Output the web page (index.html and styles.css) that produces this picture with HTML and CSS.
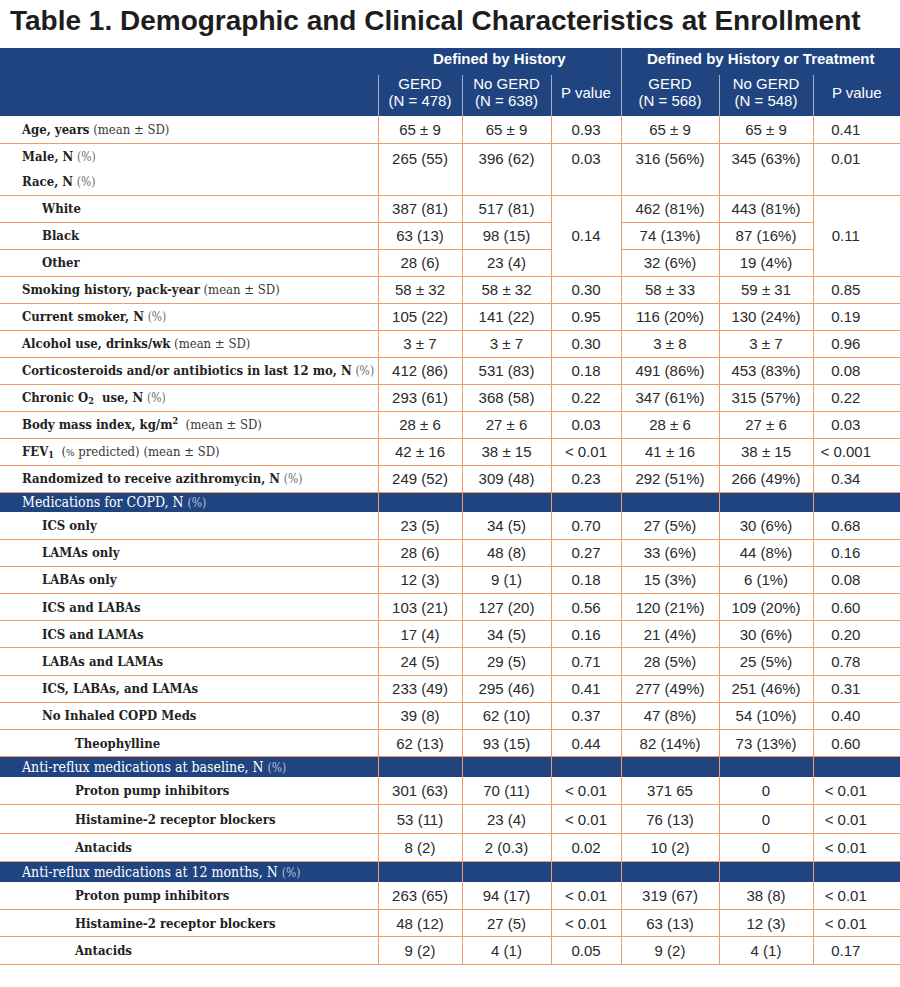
FILE: index.html
```html
<!DOCTYPE html>
<html>
<head>
<meta charset="utf-8">
<link rel="stylesheet" href="styles.css">
</head>
<body>
<h1 class="title">Table 1. Demographic and Clinical Characteristics at Enrollment</h1>
<table class="tbl">
<colgroup>
<col class="c-label"><col class="c-g1"><col class="c-n1"><col class="c-p1"><col class="c-g2"><col class="c-n2"><col class="c-p2">
</colgroup>
<thead>
<tr class="h1">
<th rowspan="2" class="blank"></th>
<th colspan="3" class="grp">Defined by History</th>
<th colspan="3" class="grp sep">Defined by History or Treatment</th>
</tr>
<tr class="h2">
<th class="sep">GERD<br>(N = 478)</th>
<th class="sep">No GERD<br>(N = 638)</th>
<th class="sep">P value</th>
<th class="sep">GERD<br>(N = 568)</th>
<th class="sep">No GERD<br>(N = 548)</th>
<th class="sep">P value</th>
</tr>
</thead>
<tbody class="top">
<tr><td class="lbl"><b>Age, years</b> <span class="par">(mean ± SD)</span></td><td>65 ± 9</td><td>65 ± 9</td><td>0.93</td><td>65 ± 9</td><td>65 ± 9</td><td class="pl">0.41</td></tr>
<tr class="male"><td class="lbl"><b>Male, N</b> <span class="pct">(%)</span></td><td>265 (55)</td><td>396 (62)</td><td>0.03</td><td>316 (56%)</td><td>345 (63%)</td><td class="pl">0.01</td></tr>
<tr class="race"><td class="lbl"><b>Race, N</b> <span class="pct">(%)</span></td><td></td><td></td><td></td><td></td><td></td><td class="pl"></td></tr>
<tr><td class="lbl sub"><b>White</b></td><td>387 (81)</td><td>517 (81)</td><td rowspan="3">0.14</td><td>462 (81%)</td><td>443 (81%)</td><td rowspan="3" class="pl">0.11</td></tr>
<tr><td class="lbl sub"><b>Black</b></td><td>63 (13)</td><td>98 (15)</td><td>74 (13%)</td><td>87 (16%)</td></tr>
<tr><td class="lbl sub"><b>Other</b></td><td>28 (6)</td><td>23 (4)</td><td>32 (6%)</td><td>19 (4%)</td></tr>
<tr><td class="lbl"><b>Smoking history, pack-year</b> <span class="par">(mean ± SD)</span></td><td>58 ± 32</td><td>58 ± 32</td><td>0.30</td><td>58 ± 33</td><td>59 ± 31</td><td class="pl">0.85</td></tr>
<tr><td class="lbl"><b>Current smoker, N</b> <span class="pct">(%)</span></td><td>105 (22)</td><td>141 (22)</td><td>0.95</td><td>116 (20%)</td><td>130 (24%)</td><td class="pl">0.19</td></tr>
<tr><td class="lbl"><b>Alcohol use, drinks/wk</b> <span class="par">(mean ± SD)</span></td><td>3 ± 7</td><td>3 ± 7</td><td>0.30</td><td>3 ± 8</td><td>3 ± 7</td><td class="pl">0.96</td></tr>
<tr><td class="lbl"><b>Corticosteroids and/or antibiotics in last 12 mo, N</b> <span class="pct">(%)</span></td><td>412 (86)</td><td>531 (83)</td><td>0.18</td><td>491 (86%)</td><td>453 (83%)</td><td class="pl">0.08</td></tr>
<tr><td class="lbl"><b>Chronic O<sub>2</sub>&nbsp; use, N</b> <span class="pct">(%)</span></td><td>293 (61)</td><td>368 (58)</td><td>0.22</td><td>347 (61%)</td><td>315 (57%)</td><td class="pl">0.22</td></tr>
<tr><td class="lbl"><b>Body mass index, kg/m<sup>2</sup></b>&nbsp; <span class="par">(mean ± SD)</span></td><td>28 ± 6</td><td>27 ± 6</td><td>0.03</td><td>28 ± 6</td><td>27 ± 6</td><td class="pl">0.03</td></tr>
<tr><td class="lbl"><b>FEV<sub>1</sub></b>&nbsp; <span class="par">(<span class="pcts">%</span> predicted) (mean ± SD)</span></td><td>42 ± 16</td><td>38 ± 15</td><td>&lt; 0.01</td><td>41 ± 16</td><td>38 ± 15</td><td class="pl">&lt; 0.001</td></tr>
<tr><td class="lbl"><b>Randomized to receive azithromycin, N</b> <span class="pct">(%)</span></td><td>249 (52)</td><td>309 (48)</td><td>0.23</td><td>292 (51%)</td><td>266 (49%)</td><td class="pl">0.34</td></tr>
</tbody>
<tbody class="meds">
<tr class="sec"><td class="lbl">Medications for COPD, N <span class="pct">(%)</span></td><td></td><td></td><td></td><td></td><td></td><td></td></tr>
<tr><td class="lbl sub"><b>ICS only</b></td><td>23 (5)</td><td>34 (5)</td><td>0.70</td><td>27 (5%)</td><td>30 (6%)</td><td class="pl">0.68</td></tr>
<tr><td class="lbl sub"><b>LAMAs only</b></td><td>28 (6)</td><td>48 (8)</td><td>0.27</td><td>33 (6%)</td><td>44 (8%)</td><td class="pl">0.16</td></tr>
<tr><td class="lbl sub"><b>LABAs only</b></td><td>12 (3)</td><td>9 (1)</td><td>0.18</td><td>15 (3%)</td><td>6 (1%)</td><td class="pl">0.08</td></tr>
<tr><td class="lbl sub"><b>ICS and LABAs</b></td><td>103 (21)</td><td>127 (20)</td><td>0.56</td><td>120 (21%)</td><td>109 (20%)</td><td class="pl">0.60</td></tr>
<tr><td class="lbl sub"><b>ICS and LAMAs</b></td><td>17 (4)</td><td>34 (5)</td><td>0.16</td><td>21 (4%)</td><td>30 (6%)</td><td class="pl">0.20</td></tr>
<tr><td class="lbl sub"><b>LABAs and LAMAs</b></td><td>24 (5)</td><td>29 (5)</td><td>0.71</td><td>28 (5%)</td><td>25 (5%)</td><td class="pl">0.78</td></tr>
<tr><td class="lbl sub"><b>ICS, LABAs, and LAMAs</b></td><td>233 (49)</td><td>295 (46)</td><td>0.41</td><td>277 (49%)</td><td>251 (46%)</td><td class="pl">0.31</td></tr>
<tr><td class="lbl sub"><b>No Inhaled COPD Meds</b></td><td>39 (8)</td><td>62 (10)</td><td>0.37</td><td>47 (8%)</td><td>54 (10%)</td><td class="pl">0.40</td></tr>
<tr><td class="lbl sub2"><b>Theophylline</b></td><td>62 (13)</td><td>93 (15)</td><td>0.44</td><td>82 (14%)</td><td>73 (13%)</td><td class="pl">0.60</td></tr>
</tbody>
<tbody class="base">
<tr class="sec"><td class="lbl">Anti-reflux medications at baseline, N <span class="pct">(%)</span></td><td></td><td></td><td></td><td></td><td></td><td></td></tr>
<tr><td class="lbl sub2"><b>Proton pump inhibitors</b></td><td>301 (63)</td><td>70 (11)</td><td>&lt; 0.01</td><td>371 65</td><td>0</td><td class="pl">&lt; 0.01</td></tr>
<tr><td class="lbl sub2"><b>Histamine-2 receptor blockers</b></td><td>53 (11)</td><td>23 (4)</td><td>&lt; 0.01</td><td>76 (13)</td><td>0</td><td class="pl">&lt; 0.01</td></tr>
<tr><td class="lbl sub2"><b>Antacids</b></td><td>8 (2)</td><td>2 (0.3)</td><td>0.02</td><td>10 (2)</td><td>0</td><td class="pl">&lt; 0.01</td></tr>
</tbody>
<tbody class="m12">
<tr class="sec"><td class="lbl">Anti-reflux medications at 12 months, N <span class="pct">(%)</span></td><td></td><td></td><td></td><td></td><td></td><td></td></tr>
<tr><td class="lbl sub2"><b>Proton pump inhibitors</b></td><td>263 (65)</td><td>94 (17)</td><td>&lt; 0.01</td><td>319 (67)</td><td>38 (8)</td><td class="pl">&lt; 0.01</td></tr>
<tr><td class="lbl sub2"><b>Histamine-2 receptor blockers</b></td><td>48 (12)</td><td>27 (5)</td><td>&lt; 0.01</td><td>63 (13)</td><td>12 (3)</td><td class="pl">&lt; 0.01</td></tr>
<tr><td class="lbl sub2"><b>Antacids</b></td><td>9 (2)</td><td>4 (1)</td><td>0.05</td><td>9 (2)</td><td>4 (1)</td><td class="pl">0.17</td></tr>
</tbody>
</table>
</body>
</html>
```
FILE: styles.css
```css
html, body {
  margin: 0;
  padding: 0;
  background: #ffffff;
}
body {
  width: 900px;
  height: 987px;
  overflow: hidden;
}
.title {
  margin: 0;
  padding: 5px 0 11px 10px;
  height: 32px;
  line-height: 32px;
  font-family: "Liberation Sans", Arial, sans-serif;
  font-weight: bold;
  font-size: 28px;
  color: #1d1d1d;
  white-space: nowrap;
  letter-spacing: 0;
}
.tbl {
  width: 900px;
  border-collapse: collapse;
  table-layout: fixed;
  font-family: "Liberation Sans", Arial, sans-serif;
  font-size: 15px;
  color: #2a2a2a;
}
.c-label { width: 378px; }
.c-g1 { width: 84px; }
.c-n1 { width: 89px; }
.c-p1 { width: 70px; }
.c-g2 { width: 98px; }
.c-n2 { width: 94px; }
.c-p2 { width: 87px; }

thead th {
  background: #1f4480;
  color: #ffffff;
  font-weight: normal;
  padding: 0;
  text-align: center;
  vertical-align: middle;
}
.h1 { height: 27px; }
.h2 { height: 40px; }
.h1 th.grp {
  font-weight: bold;
  padding-top: 1px;
  vertical-align: top;
  line-height: 20px;
}
.h2 th { line-height: 17px; padding-bottom: 7px; }
thead th.sep { border-left: 1px solid #9fb0cf; }
thead th.blank { border: none; }

tbody td {
  padding: 0;
  text-align: center;
  vertical-align: middle;
  border-bottom: 1px solid #f39a63;
  border-left: 1px solid #f39a63;
  white-space: nowrap;
}
tbody td.lbl {
  border-left: none;
  text-align: left;
  padding-left: 22px;
  font-family: "DejaVu Serif Condensed", "DejaVu Serif", serif;
  font-stretch: condensed;
  font-size: 13px;
  color: #222;
}
tbody td.pl { padding-right: 22px; }
.lbl b { font-weight: bold; }
.lbl.sub { padding-left: 42px; }
.lbl.sub2 { padding-left: 75px; }
.par { font-weight: normal; color: #3a3a3a; }
.pct { font-weight: normal; font-size: 12px; color: #6a6a6a; }
.pcts { font-size: 10px; }
sub, sup { font-size: 9px; line-height: 0; }
sub { vertical-align: -2px; }
sup { vertical-align: 5px; }

.top tr { height: 27px; }
.top tr.male, .top tr.race { height: 26px; }
.top tr.male td { border-bottom: none; vertical-align: top; padding-top: 6px; }
.top tr.male td.lbl { vertical-align: middle; padding-top: 0; }
.meds tr { height: 27.2px; }
.base tr { height: 28.3px; }
.m12 tr { height: 27.7px; }
tbody tr.sec { height: 20px; }
tr.sec td {
  background: #1f4480;
  color: #fff;
  border-bottom: none;
}
tr.sec td.lbl { color: #fff; font-weight: normal; font-size: 14px; }
tr.sec .pct { color: #b7c3da; font-size: 12px; }
```
